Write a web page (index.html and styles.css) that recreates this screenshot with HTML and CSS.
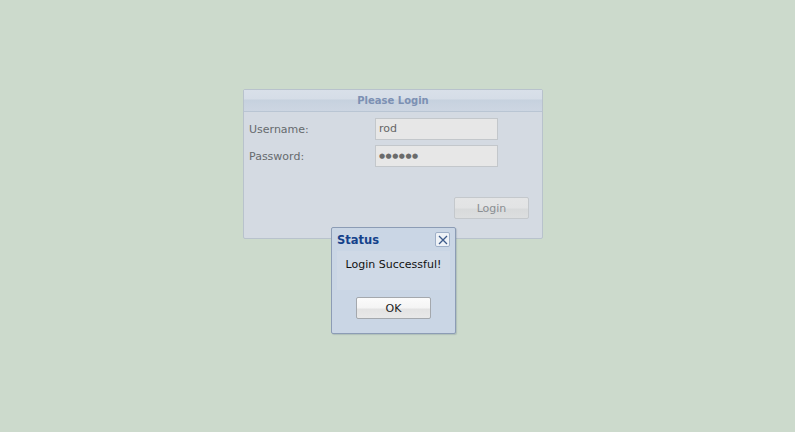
FILE: index.html
```
<!DOCTYPE html>
<html>
<head>
<meta charset="utf-8">
<link rel="stylesheet" href="styles.css">
</head>
<body>
<div class="stage">
  <div class="panel">
    <div class="panel-header">Please Login</div>
    <div class="panel-body">
      <div class="row">
        <label class="lbl">Username:</label>
        <div class="field">rod</div>
      </div>
      <div class="row">
        <label class="lbl">Password:</label>
        <div class="field pw">●●●●●●</div>
      </div>
      <div class="actions">
        <div class="btn btn-login">Login</div>
      </div>
    </div>
  </div>
</div>
<div class="dialog">
  <div class="dlg-header">
    <span class="dlg-title">Status</span>
    <span class="dlg-close"><svg width="10" height="10" viewBox="0 0 10 10"><path d="M1 1L9 9M9 1L1 9" stroke="#3d5a8a" stroke-width="1.3" fill="none"/></svg></span>
  </div>
  <div class="dlg-body">Login Successful!</div>
  <div class="dlg-footer">
    <div class="btn btn-ok">OK</div>
  </div>
</div>
</body>
</html>
```
FILE: styles.css
```
html, body {
  margin: 0;
  padding: 0;
}
body {
  background: #ccdacc;
  width: 795px;
  height: 432px;
  font-family: "DejaVu Sans", Verdana, sans-serif;
  font-size: 11px;
  overflow: hidden;
  position: relative;
}
.stage {
  padding: 89px 0 0 243px;
}
.panel {
  width: 298px;
  height: 148px;
  border: 1px solid #b8c2cc;
  border-radius: 2px;
  background: #d4dae2;
  display: flex;
  flex-direction: column;
}
.panel-header {
  height: 21px;
  line-height: 22px;
  border-bottom: 1px solid #b9c5d3;
  background: linear-gradient(#d9e0e9 0, #d5dde7 9px, #c6d1de 10px, #c9d3e0 14px, #cdd6e2 21px);
  text-align: center;
  font-weight: bold;
  color: #7c90b3;
  font-size: 10px;
}
.panel-body {
  padding: 6px 13px 0 5px;
  display: flex;
  flex-direction: column;
}
.row {
  display: flex;
  align-items: center;
  height: 22px;
  margin-bottom: 5px;
}
.lbl {
  width: 126px;
  color: #666a6e;
  font-size: 11px;
}
.field {
  width: 118px;
  height: 20px;
  line-height: 20px;
  border: 1px solid #c3c7cb;
  background: #e7e7e7;
  padding-left: 3px;
  color: #666;
  font-size: 11px;
}
.field.pw {
  font-size: 7px;
  letter-spacing: 0.5px;
  color: #6b6b6b;
}
.actions {
  display: flex;
  justify-content: flex-end;
  margin-top: 25px;
}
.btn {
  width: 73px;
  height: 20px;
  line-height: 21px;
  border: 1px solid #c4c8cc;
  border-radius: 2px;
  text-align: center;
  font-size: 11px;
}
.btn-login {
  background: linear-gradient(#e4e5e6 0, #e2e3e4 10px, #d8dadb 11px, #dcdedf 20px);
  color: #8a8e92;
}
.dialog {
  position: absolute;
  left: 331px;
  top: 227px;
  width: 123px;
  height: 105px;
  border: 1px solid #8c9cb5;
  border-radius: 2px;
  background: #cad6e5;
  display: flex;
  flex-direction: column;
  box-shadow: 1px 1px 1px rgba(90,110,130,0.25);
}
.dlg-header {
  height: 23px;
  display: flex;
  align-items: center;
  justify-content: space-between;
  padding: 0 5px 0 5px;
}
.dlg-title {
  font-weight: bold;
  color: #15428b;
  font-size: 11.5px;
}
.dlg-close {
  width: 13px;
  height: 13px;
  border: 1px solid #9fb0c8;
  border-radius: 2px;
  background: #eef2f7;
  display: flex;
  align-items: center;
  justify-content: center;
}
.dlg-body {
  margin: 0 5px;
  height: 39px;
  background: #cfd9e6;
  text-align: center;
  line-height: 27px;
  color: #111;
  font-size: 11px;
}
.dlg-footer {
  display: flex;
  justify-content: center;
  padding-top: 7px;
}
.btn-ok {
  background: linear-gradient(#fbfbfb 0, #f4f4f4 10px, #e3e3e3 11px, #e8e8e8 20px);
  border-color: #a4a8ad;
  color: #222;
}
```
